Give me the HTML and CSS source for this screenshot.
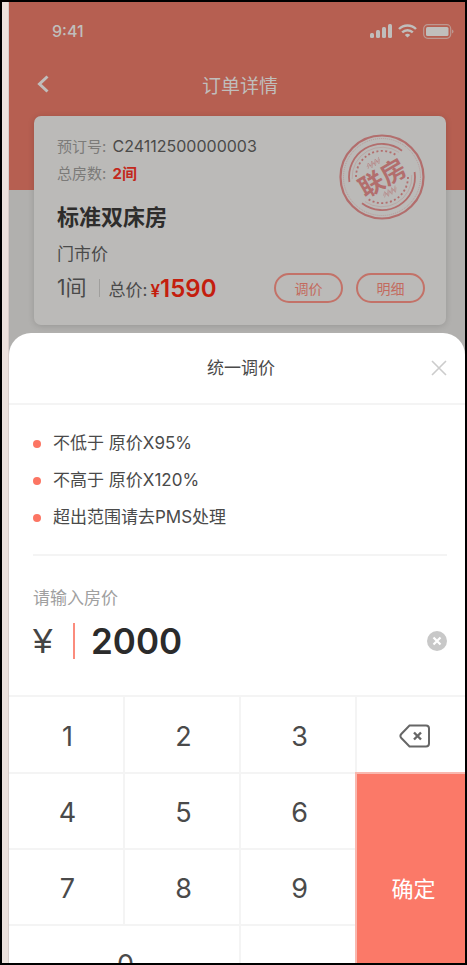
FILE: index.html
```html
<!DOCTYPE html>
<html lang="zh-CN">

<head>
    <meta charset="UTF-8">
    <meta name="viewport" content="width=device-width, initial-scale=1.0">
    <title>订单详情</title>
    <link rel="stylesheet" href="styles.css">
</head>

<body>

    <div class="phone">
        <section class="order">
            <div class="status-bar">
                <span class="time">9:41</span>
                <div class="status-icons">
                    <svg width="22" height="14" viewBox="0 0 22 14" fill="currentColor">
                        <rect x="0" y="9" width="4" height="5" rx="1.5" />
                        <rect x="6" y="6" width="4" height="8" rx="1.5" />
                        <rect x="12" y="3" width="4" height="11" rx="1.5" />
                        <rect x="18" y="0" width="4" height="14" rx="1.5" />
                    </svg>
                    <svg width="19" height="14" viewBox="0 0 19 14" fill="none" stroke="currentColor" stroke-width="2.4">
                        <path d="M1 5a12 12 0 0 1 17 0" />
                        <path d="M4.2 8.4a7.5 7.5 0 0 1 10.6 0" />
                        <path d="M9.5 13.6L6.8 11a3.8 3.8 0 0 1 5.4 0z" fill="currentColor" stroke="none" />
                    </svg>
                    <svg width="31" height="15" viewBox="0 0 31 15">
                        <rect x="0.7" y="0.7" width="27" height="13.6" rx="4" fill="none" stroke="currentColor" stroke-width="1.2" opacity="0.6" />
                        <rect x="3" y="3" width="22.5" height="9" rx="1.5" fill="currentColor" />
                        <path d="M29 5.5v4q1.5-.5 1.5-2t-1.5-2z" fill="currentColor" opacity="0.6" />
                    </svg>
                </div>
            </div>

            <header class="nav">
                <button class="back" type="button" aria-label="返回">
                    <svg width="12" height="18" viewBox="0 0 12 18" fill="none" stroke="currentColor" stroke-width="3">
                        <path d="M10.5 1.5L2.5 9l8 7.5" />
                    </svg>
                </button>
                <h1>订单详情</h1>
            </header>

            <div class="card">
                <p class="info">预订号: <span class="order-no">C24112500000003</span></p>
                <p class="info">总房数: <strong>2间</strong></p>
                <h2>标准双床房</h2>
                <p class="rate">门市价</p>
                <div class="card-footer">
                    <span class="count">1间</span>
                    <span class="total">总价:</span>
                    <span class="price"><small>¥</small>1590</span>
                    <button class="pill" type="button">调价</button>
                    <button class="pill" type="button">明细</button>
                </div>

                <!-- 联房印章 -->
                <svg class="stamp" width="88" height="88" viewBox="-44 -44 88 88" fill="none" stroke="currentColor">
                    <circle r="41.5" stroke-width="2.2" />
                    <circle r="38.5" stroke-width="1" stroke-dasharray="1 1" opacity="0.4" />
                    <path d="M-32.6 5A33 33 0 0 1 20-26.3" stroke-width="1.8" />
                    <path d="M32.6-5A33 33 0 0 1-20 26.3" stroke-width="1.8" />
                    <path d="M-29.8 2A30 30 0 0 1 17-24.6M29.8-2A30 30 0 0 1-17 24.6" stroke-width="0.5" opacity="0.5" />
                    <path d="M-26 0A26 26 0 0 1 14-22M26 0A26 26 0 0 1-14 22" stroke-width="1.8" stroke-dasharray="2 2.4" />
                    <g transform="rotate(-30)">
                        <path d="M-8-16l3-3 1 4 3-4 1 4 3-4 1 4 3-4M-8-14l3-3 1 4 3-4 1 4 3-4 1 4 3-4" stroke-width="0.8" opacity="0.5" />
                        <path d="M-8 17l3-3 1 4 3-4 1 4 3-4 1 4 3-4M-8 19l3-3 1 4 3-4 1 4 3-4 1 4 3-4" stroke-width="0.8" opacity="0.5" />
                        <text x="-25" y="10" font-size="25" font-weight="700" fill="currentColor" stroke="none">联房</text>
                    </g>
                </svg>
            </div>
        </section>

        <section class="sheet">
            <header class="sheet-header">
                <h2>统一调价</h2>
                <button class="close" type="button" aria-label="关闭">
                    <svg width="16" height="16" viewBox="0 0 16 16" stroke="currentColor" stroke-width="1.6">
                        <path d="M1 1l14 14M15 1L1 15" />
                    </svg>
                </button>
            </header>

            <div class="sheet-body">
                <ul class="rules">
                    <li>不低于 原价X95%</li>
                    <li>不高于 原价X120%</li>
                    <li>超出范围请去PMS处理</li>
                </ul>

                <label for="amount">请输入房价</label>
                <div class="amount-row">
                    <span class="yen">¥</span>
                    <input id="amount" type="text" inputmode="none" value="2000">
                    <button class="clear" type="button" aria-label="清空">
                        <svg width="20" height="20" viewBox="0 0 20 20">
                            <circle cx="10" cy="10" r="10" fill="#c8c8c8" />
                            <path d="M6.5 6.5l7 7M13.5 6.5l-7 7" stroke="#fff" stroke-width="2.2" />
                        </svg>
                    </button>
                </div>
            </div>

            <div class="keypad">
                <button type="button">1</button>
                <button type="button">2</button>
                <button type="button">3</button>
                <button class="delete" type="button" aria-label="删除">
                    <svg width="32" height="24" viewBox="0 0 32 24" fill="none" stroke="currentColor" stroke-width="2">
                        <path d="M10.5 1.5H27a3 3 0 0 1 3 3v15a3 3 0 0 1-3 3H10.5L2.3 14q-1.8-2 0-4z" />
                        <path d="M15 8.5l7 7M22 8.5l-7 7" stroke-width="2.4" />
                    </svg>
                </button>
                <button type="button">4</button>
                <button type="button">5</button>
                <button type="button">6</button>
                <button class="confirm" type="button">确定</button>
                <button type="button">7</button>
                <button type="button">8</button>
                <button type="button">9</button>
                <button class="zero" type="button">0</button>
                <button type="button">.</button>
            </div>
        </section>
    </div>

    <script>
        const amount = document.getElementById('amount');

        // 数字键盘输入
        document.querySelectorAll('.keypad button').forEach(key => {
            key.addEventListener('click', () => {
                if (key.classList.contains('confirm')) return;
                if (key.classList.contains('delete')) {
                    amount.value = amount.value.slice(0, -1);
                } else {
                    amount.value += key.textContent;
                }
            });
        });

        document.querySelector('.clear').addEventListener('click', () => {
            amount.value = '';
        });
    </script>

</body>

</html>
```
FILE: styles.css
```css
* {
    box-sizing: border-box;
}

body {
    margin: 0;
    font-family: Inter, "Noto Sans CJK SC", sans-serif;
    color: #4a4a4a;
}

h1, h2, p, ul {
    margin: 0;
    padding: 0;
}

button {
    padding: 0;
    border: 0;
    background: none;
    font-family: inherit;
    color: inherit;
    cursor: pointer;
}

svg {
    display: block;
}

.phone {
    height: 100vh;
    overflow: hidden;
    border: 2px solid #000;
    background: #b1b0ae;
    box-shadow: inset 6px 0 #ece1dc, inset 7px 0 #d8cdc9;
    padding-left: 7px;
}

/* 订单 */
.order {
    padding: 0 19px 8px 25px;
    background: linear-gradient(#b65f51 188px, #b1b0ae 188px);
}

.status-bar {
    display: flex;
    align-items: center;
    justify-content: space-between;
    height: 58px;
    margin-right: -8px;
    padding-left: 18px;
    color: #c0bebc;
}

.time {
    font-size: 16px;
    font-weight: 500;
}

.status-icons {
    display: flex;
    align-items: center;
    gap: 6px;
}

.nav {
    display: flex;
    align-items: center;
    height: 48px;
    margin-bottom: 8px;
    color: #c0bebc;
}

.back {
    width: 20px;
    padding-left: 3px;
}

.nav h1 {
    flex: 1;
    padding-right: 20px;
    font-size: 19px;
    font-weight: 400;
    text-align: center;
}

.card {
    position: relative;
    padding: 17px 21px 22px 23px;
    border-radius: 7px;
    background: #bbbab8;
    box-shadow: 0 1px 6px rgba(0, 0, 0, 0.15);
}

.info {
    font-size: 15px;
    line-height: 27px;
    color: #7c7b79;
}

.order-no {
    margin-left: 2px;
    font-size: 16px;
    color: #4b4a49;
}

.info strong {
    margin-left: 2px;
    color: #c3281c;
}

.card h2 {
    margin-top: 8px;
    font-size: 22px;
    line-height: 44px;
    color: #2e2d2c;
}

.rate {
    font-size: 17px;
    line-height: 30px;
}

.card-footer {
    display: flex;
    align-items: center;
    height: 30px;
    margin-top: 4px;
}

.count {
    padding-right: 12px;
    border-right: 1px solid #a09f9d;
    font-size: 21px;
    line-height: 18px;
}

.total {
    margin-left: 9px;
    font-size: 17px;
}

.price {
    flex: 1;
    margin-left: 3px;
    font-size: 24px;
    font-weight: 600;
    color: #c41e0e;
}

.price small {
    font-size: 17px;
}

.pill {
    width: 69px;
    height: 30px;
    margin-left: 13px;
    border: 2px solid #c37268;
    border-radius: 15px;
    font-size: 14px;
    color: #c36a5e;
}

.stamp {
    position: absolute;
    top: 17px;
    right: 20px;
    color: #b26e6d;
}

/* 调价弹层 */
.sheet {
    border-radius: 22px 22px 0 0;
    background: #fff;
}

.sheet-header {
    display: flex;
    align-items: center;
    height: 72px;
    padding: 0 18px 0 42px;
    border-bottom: 2px solid #f4f4f4;
}

.sheet-header h2 {
    flex: 1;
    padding-bottom: 4px;
    font-size: 17px;
    font-weight: 400;
    text-align: center;
}

.close {
    color: #ccc;
}

.sheet-body {
    padding: 20px 18px 34px 24px;
}

.rules {
    margin-bottom: 30px;
    padding-bottom: 18px;
    border-bottom: 2px solid #f4f4f4;
    list-style: none;
}

.rules li {
    display: flex;
    align-items: center;
    gap: 12px;
    font-size: 17px;
    line-height: 37px;
}

.rules li::before {
    content: "";
    width: 8px;
    height: 8px;
    border-radius: 50%;
    background: #fc7563;
}

label {
    display: block;
    font-size: 17px;
    line-height: 24px;
    color: #a0a0a0;
}

.amount-row {
    display: flex;
    align-items: center;
    height: 40px;
    margin-top: 11px;
}

.yen {
    width: 40px;
    font-family: "Liberation Sans", sans-serif;
    font-size: 35px;
    color: #444;
}

#amount {
    flex: 1;
    min-width: 0;
    height: 36px;
    padding: 0 0 0 16px;
    border: 0;
    border-left: 2px solid #fb8c7d;
    outline: none;
    background: none;
    font-family: inherit;
    font-size: 35px;
    font-weight: 600;
    color: #2b2b2b;
}

.keypad {
    display: grid;
    grid-template-columns: 19fr 19fr 19fr 18fr;
    grid-template-rows: 75px;
    grid-auto-rows: 74px;
    gap: 2px;
    border-top: 2px solid #f4f4f4;
    background: #f4f4f4;
}

.keypad button {
    padding: 3px 0 0 3px;
    background: #fff;
    font-size: 27px;
}

.keypad svg {
    margin: 0 auto;
    color: #666;
}

.keypad .delete {
    padding-left: 8px;
}

.keypad .zero {
    grid-column: span 2;
}

.keypad .confirm {
    grid-row: span 3;
    padding: 0 0 0 5px;
    background: #fb7968;
    box-shadow: 0 0 0 2px #f9b8af;
    font-size: 22px;
    color: #fff;
}
```
